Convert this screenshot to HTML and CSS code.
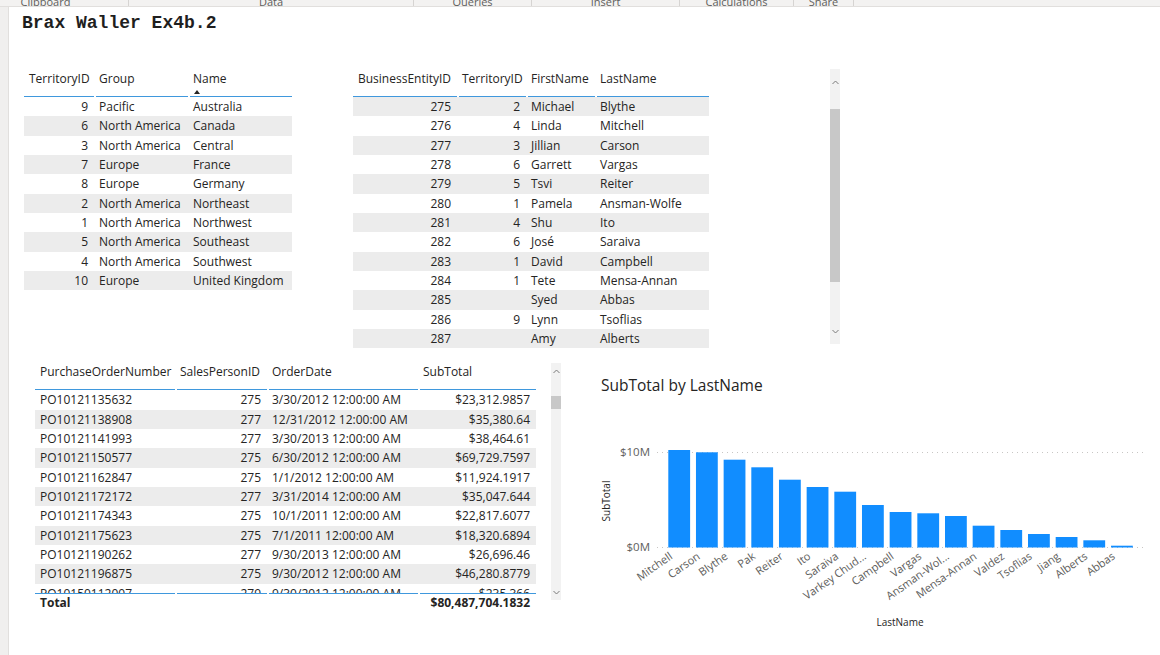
FILE: index.html
```html
<!DOCTYPE html>
<html>
<head>
<meta charset="utf-8">
<link rel="stylesheet" href="styles.css">
</head>
<body>
<div class="ribbon">
  <div class="grp g1"><span>Clipboard</span></div>
  <div class="grp g2"><span>Data</span></div>
  <div class="grp g3"><span>Queries</span></div>
  <div class="grp g4"><span>Insert</span></div>
  <div class="grp g5"><span>Calculations</span></div>
  <div class="grp g6"><span>Share</span></div>
</div>
<div class="main">
  <div class="gutter"></div>
  <div class="canvas">
    <h1 class="title">Brax Waller Ex4b.2</h1>

    <div class="row-top">
      <div class="tbl t1">
        <div class="r h">
          <div class="c">TerritoryID</div><div class="c">Group</div><div class="c">Name<span class="sort"></span></div>
        </div>
        <div class="body">
          <div class="r"><div class="c n">9</div><div class="c">Pacific</div><div class="c">Australia</div></div>
          <div class="r"><div class="c n">6</div><div class="c">North America</div><div class="c">Canada</div></div>
          <div class="r"><div class="c n">3</div><div class="c">North America</div><div class="c">Central</div></div>
          <div class="r"><div class="c n">7</div><div class="c">Europe</div><div class="c">France</div></div>
          <div class="r"><div class="c n">8</div><div class="c">Europe</div><div class="c">Germany</div></div>
          <div class="r"><div class="c n">2</div><div class="c">North America</div><div class="c">Northeast</div></div>
          <div class="r"><div class="c n">1</div><div class="c">North America</div><div class="c">Northwest</div></div>
          <div class="r"><div class="c n">5</div><div class="c">North America</div><div class="c">Southeast</div></div>
          <div class="r"><div class="c n">4</div><div class="c">North America</div><div class="c">Southwest</div></div>
          <div class="r"><div class="c n">10</div><div class="c">Europe</div><div class="c">United Kingdom</div></div>
        </div>
      </div>

      <div class="visual v2">
        <div class="tbl t2">
          <div class="r h">
            <div class="c">BusinessEntityID</div><div class="c">TerritoryID</div><div class="c">FirstName</div><div class="c">LastName</div>
          </div>
          <div class="body">
            <div class="r"><div class="c n">275</div><div class="c n">2</div><div class="c">Michael</div><div class="c">Blythe</div></div>
            <div class="r"><div class="c n">276</div><div class="c n">4</div><div class="c">Linda</div><div class="c">Mitchell</div></div>
            <div class="r"><div class="c n">277</div><div class="c n">3</div><div class="c">Jillian</div><div class="c">Carson</div></div>
            <div class="r"><div class="c n">278</div><div class="c n">6</div><div class="c">Garrett</div><div class="c">Vargas</div></div>
            <div class="r"><div class="c n">279</div><div class="c n">5</div><div class="c">Tsvi</div><div class="c">Reiter</div></div>
            <div class="r"><div class="c n">280</div><div class="c n">1</div><div class="c">Pamela</div><div class="c">Ansman-Wolfe</div></div>
            <div class="r"><div class="c n">281</div><div class="c n">4</div><div class="c">Shu</div><div class="c">Ito</div></div>
            <div class="r"><div class="c n">282</div><div class="c n">6</div><div class="c">José</div><div class="c">Saraiva</div></div>
            <div class="r"><div class="c n">283</div><div class="c n">1</div><div class="c">David</div><div class="c">Campbell</div></div>
            <div class="r"><div class="c n">284</div><div class="c n">1</div><div class="c">Tete</div><div class="c">Mensa-Annan</div></div>
            <div class="r"><div class="c n">285</div><div class="c n"></div><div class="c">Syed</div><div class="c">Abbas</div></div>
            <div class="r"><div class="c n">286</div><div class="c n">9</div><div class="c">Lynn</div><div class="c">Tsoflias</div></div>
            <div class="r"><div class="c n">287</div><div class="c n"></div><div class="c">Amy</div><div class="c">Alberts</div></div>
          </div>
        </div>
        <div class="sb sb2">
          <div class="arrow"><svg width="7" height="5" viewBox="0 0 7 5"><polyline points="0.5,4 3.5,1 6.5,4" fill="none" stroke="#7a7a7a" stroke-width="1"/></svg></div>
          <div class="pre"></div>
          <div class="thumb"></div>
          <div class="fill"></div>
          <div class="arrow"><svg width="7" height="5" viewBox="0 0 7 5"><polyline points="0.5,1 3.5,4 6.5,1" fill="none" stroke="#7a7a7a" stroke-width="1"/></svg></div>
        </div>
      </div>
    </div>

    <div class="row-bottom">
      <div class="visual v3">
        <div class="tbl t3">
          <div class="r h">
            <div class="c">PurchaseOrderNumber</div><div class="c">SalesPersonID</div><div class="c">OrderDate</div><div class="c">SubTotal</div>
          </div>
          <div class="body clip">
            <div class="r"><div class="c">PO10121135632</div><div class="c n">275</div><div class="c">3/30/2012 12:00:00 AM</div><div class="c n">$23,312.9857</div></div>
            <div class="r"><div class="c">PO10121138908</div><div class="c n">277</div><div class="c">12/31/2012 12:00:00 AM</div><div class="c n">$35,380.64</div></div>
            <div class="r"><div class="c">PO10121141993</div><div class="c n">277</div><div class="c">3/30/2013 12:00:00 AM</div><div class="c n">$38,464.61</div></div>
            <div class="r"><div class="c">PO10121150577</div><div class="c n">275</div><div class="c">6/30/2012 12:00:00 AM</div><div class="c n">$69,729.7597</div></div>
            <div class="r"><div class="c">PO10121162847</div><div class="c n">275</div><div class="c">1/1/2012 12:00:00 AM</div><div class="c n">$11,924.1917</div></div>
            <div class="r"><div class="c">PO10121172172</div><div class="c n">277</div><div class="c">3/31/2014 12:00:00 AM</div><div class="c n">$35,047.644</div></div>
            <div class="r"><div class="c">PO10121174343</div><div class="c n">275</div><div class="c">10/1/2011 12:00:00 AM</div><div class="c n">$22,817.6077</div></div>
            <div class="r"><div class="c">PO10121175623</div><div class="c n">275</div><div class="c">7/1/2011 12:00:00 AM</div><div class="c n">$18,320.6894</div></div>
            <div class="r"><div class="c">PO10121190262</div><div class="c n">277</div><div class="c">9/30/2013 12:00:00 AM</div><div class="c n">$26,696.46</div></div>
            <div class="r"><div class="c">PO10121196875</div><div class="c n">275</div><div class="c">9/30/2012 12:00:00 AM</div><div class="c n">$46,280.8779</div></div>
            <div class="r"><div class="c">PO10150112007</div><div class="c n">279</div><div class="c">9/30/2012 12:00:00 AM</div><div class="c n">$235,366</div></div>
          </div>
          <div class="r total">
            <div class="c">Total</div><div class="c"></div><div class="c"></div><div class="c n">$80,487,704.1832</div>
          </div>
        </div>
        <div class="sb sb3">
          <div class="arrow"><svg width="7" height="5" viewBox="0 0 7 5"><polyline points="0.5,4 3.5,1 6.5,4" fill="none" stroke="#7a7a7a" stroke-width="1"/></svg></div>
          <div class="pre"></div>
          <div class="thumb"></div>
          <div class="fill"></div>
          <div class="arrow"><svg width="7" height="5" viewBox="0 0 7 5"><polyline points="0.5,1 3.5,4 6.5,1" fill="none" stroke="#7a7a7a" stroke-width="1"/></svg></div>
        </div>
      </div>

      <div class="chart">
        <div class="chart-title">SubTotal by LastName</div>
        <svg class="plot" width="560" height="247" viewBox="0 0 560 247">
          <line x1="67" y1="59.5" x2="553" y2="59.5" class="grid"/>
          <line x1="67" y1="154.5" x2="553" y2="154.5" class="grid"/>
          <text x="60" y="63" class="ylab">$10M</text>
          <text x="60" y="158" class="ylab">$0M</text>
          <text class="atitle" transform="translate(19.5,108) rotate(-90)" text-anchor="middle">SubTotal</text>
          <g class="bars">
            <rect x="78.3" y="57.0" width="21.8" height="97.5"/>
            <rect x="105.97" y="59.3" width="21.8" height="95.2"/>
            <rect x="133.64" y="66.7" width="21.8" height="87.8"/>
            <rect x="161.31" y="74.3" width="21.8" height="80.2"/>
            <rect x="188.98" y="86.7" width="21.8" height="67.8"/>
            <rect x="216.65" y="94.0" width="21.8" height="60.5"/>
            <rect x="244.32" y="98.7" width="21.8" height="55.8"/>
            <rect x="271.99" y="112.0" width="21.8" height="42.5"/>
            <rect x="299.66" y="119.0" width="21.8" height="35.5"/>
            <rect x="327.33" y="120.3" width="21.8" height="34.2"/>
            <rect x="355.0" y="123.0" width="21.8" height="31.5"/>
            <rect x="382.67" y="132.7" width="21.8" height="21.8"/>
            <rect x="410.34" y="137.0" width="21.8" height="17.5"/>
            <rect x="438.01" y="141.0" width="21.8" height="13.5"/>
            <rect x="465.68" y="144.0" width="21.8" height="10.5"/>
            <rect x="493.35" y="147.3" width="21.8" height="7.2"/>
            <rect x="521.02" y="152.7" width="21.8" height="1.8"/>
          </g>
          <g class="xlabs">
            <text transform="translate(83.2,165) rotate(-35)">Mitchell</text>
            <text transform="translate(110.87,165) rotate(-35)">Carson</text>
            <text transform="translate(138.54,165) rotate(-35)">Blythe</text>
            <text transform="translate(166.21,165) rotate(-35)">Pak</text>
            <text transform="translate(193.88,165) rotate(-35)">Reiter</text>
            <text transform="translate(221.55,165) rotate(-35)">Ito</text>
            <text transform="translate(249.22,165) rotate(-35)">Saraiva</text>
            <text transform="translate(276.89,165) rotate(-35)">Varkey Chud...</text>
            <text transform="translate(304.56,165) rotate(-35)">Campbell</text>
            <text transform="translate(332.23,165) rotate(-35)">Vargas</text>
            <text transform="translate(359.9,165) rotate(-35)">Ansman-Wol...</text>
            <text transform="translate(387.57,165) rotate(-35)">Mensa-Annan</text>
            <text transform="translate(415.24,165) rotate(-35)">Valdez</text>
            <text transform="translate(442.91,165) rotate(-35)">Tsoflias</text>
            <text transform="translate(470.58,165) rotate(-35)">Jiang</text>
            <text transform="translate(498.25,165) rotate(-35)">Alberts</text>
            <text transform="translate(525.92,165) rotate(-35)">Abbas</text>
          </g>
          <text x="310" y="233" class="atitle" text-anchor="middle">LastName</text>
        </svg>
      </div>
    </div>
  </div>
</div>
</body>
</html>
```
FILE: styles.css
```css
* { box-sizing: border-box; }
html, body { margin: 0; padding: 0; }
body {
  width: 1160px;
  height: 655px;
  overflow: hidden;
  background: #ffffff;
  font-family: "Open Sans", "Noto Sans", sans-serif;
  color: #252423;
}

/* ribbon remnant */
.ribbon {
  height: 7px;
  display: flex;
  background: #f3f2f1;
  border-bottom: 1px solid #e1dfdd;
  overflow: hidden;
}
.grp {
  height: 6px;
  display: flex;
  justify-content: center;
  align-items: flex-end;
  border-right: 1px solid #d6d4d2;
  font-size: 11px;
  line-height: 14px;
  color: #605e5c;
}
.grp span { margin-bottom: -3px; white-space: nowrap; }
.g1 { width: 129px; padding-right: 37px; }
.g2 { width: 285px; }
.g3 { width: 118px; }
.g4 { width: 148px; }
.g5 { width: 114px; }
.g6 { width: 60px; }

.main {
  display: flex;
  height: 648px;
}
.gutter {
  width: 9px;
  flex: none;
  background: #f0efee;
  border-right: 1px solid #e1dfdd;
}
.canvas {
  flex: 1;
  background: #ffffff;
}

.title {
  margin: 6px 0 0 13px;
  font-family: "Liberation Mono", "Courier New", monospace;
  font-weight: bold;
  font-size: 18px;
  line-height: 20px;
  color: #1f1f1f;
}

/* tables */
.tbl {
  font-size: 12px;
  color: #252423;
}
.tbl .r {
  display: grid;
  height: 19.33px;
  line-height: 19.33px;
}
.t1 .r { grid-template-columns: 70px 94px 104px; width: 268px; }
.t2 .r { grid-template-columns: 104px 69px 69px 114px; width: 356px; }
.t3 .r { grid-template-columns: 140px 92px 151px 118px; width: 501px; }

.tbl .c {
  padding: 0 5px;
  white-space: nowrap;
  overflow: hidden;
}
.tbl .c.n { text-align: right; padding-right: 6px; }

.tbl .r.h { height: 28px; line-height: 16px; }
.tbl .r.h .c {
  padding-top: 2px;
  background: linear-gradient(#3f98dd, #3f98dd) no-repeat 2px 100% / calc(100% - 2px) 1px;
}
.tbl .r.h .c:first-child {
  background: linear-gradient(#3f98dd, #3f98dd) no-repeat 0 100% / 100% 1px;
}
.sort {
  display: block;
  width: 0;
  height: 0;
  margin: 3px 0 0 1px;
  border-left: 3.5px solid transparent;
  border-right: 3.5px solid transparent;
  border-bottom: 4px solid #252423;
}

.t1 .body .r:nth-child(even) { background: #ececec; }
.t2 .body .r:nth-child(odd) { background: #ececec; }
.t3 .body .r:nth-child(even) { background: #ececec; }

.body.clip {
  height: 203px;
  overflow: hidden;
}
.tbl .r.total {
  height: 20px;
  line-height: 19px;
  font-weight: bold;
}
.tbl .r.total .c {
  background: linear-gradient(#3f98dd, #3f98dd) no-repeat 2px 0 / calc(100% - 2px) 1px;
  padding-top: 1px;
  line-height: 18px;
}
.tbl .r.total .c:first-child {
  background: linear-gradient(#3f98dd, #3f98dd) no-repeat 0 0 / 100% 1px;
}

/* layout rows */
.row-top {
  display: flex;
  align-items: flex-start;
  margin-top: 36px;
  padding-left: 15px;
}
.visual { display: flex; align-items: flex-start; }
.v2 {
  margin-left: 61px;
  width: 487px;
}
.v2 .sb { margin-left: auto; }

.row-bottom {
  display: flex;
  align-items: flex-start;
  margin-top: 14px;
  padding-left: 26px;
}
.v3 { gap: 15px; }

/* scrollbars */
.sb {
  width: 10px;
  display: flex;
  flex-direction: column;
  background: #f2f2f2;
}
.sb .arrow {
  display: flex;
  align-items: center;
  justify-content: center;
  flex: none;
}
.sb .thumb { background: #c8c8c8; flex: none; }
.sb .fill { flex: 1; }
.sb2 { height: 275px; }
.sb2 .arrow { height: 26px; }
.sb2 .pre { height: 14px; }
.sb2 .thumb { height: 173px; }
.sb3 { height: 237px; margin-top: 1px; }
.sb3 .arrow { height: 16px; }
.sb3 .pre { height: 17px; }
.sb3 .thumb { height: 13px; }

/* chart */
.chart {
  margin-left: 29px;
  width: 560px;
}
.chart-title {
  padding-top: 14px;
  padding-left: 11px;
  height: 31px;
  font-size: 15.5px;
  line-height: 18px;
  color: #252423;
}
.plot { display: block; font-family: "Open Sans", "Noto Sans", sans-serif; }
.grid { stroke: #c8c6c4; stroke-width: 1; stroke-dasharray: 1 4; }
.ylab { font-size: 11.5px; fill: #605e5c; text-anchor: end; }
.atitle { font-size: 10px; fill: #252423; }
.bars rect { fill: #118dff; }
.xlabs text { font-size: 11px; fill: #605e5c; text-anchor: end; }
```
